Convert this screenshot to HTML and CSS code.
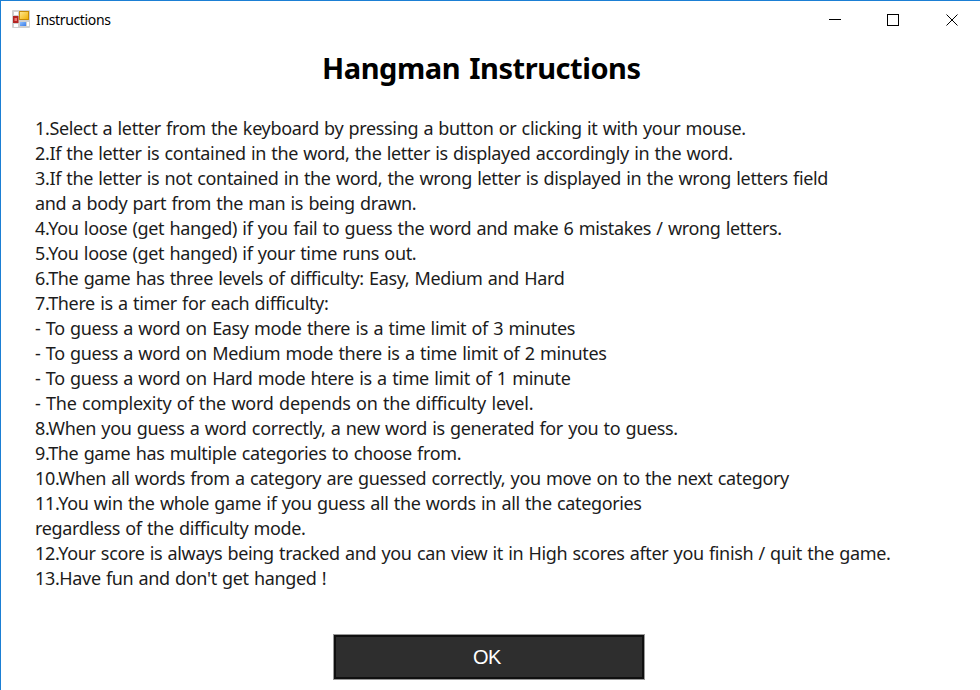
FILE: index.html
```
<!DOCTYPE html>
<html lang="en">
<head>
<meta charset="utf-8">
<title>Instructions</title>
<link rel="stylesheet" href="styles.css">
</head>
<body>
<div class="window">
  <header class="titlebar">
    <svg class="app-icon" width="18" height="18" viewBox="0 0 18 18">
      <defs>
        <linearGradient id="gold" x2="1" y2="1"><stop stop-color="#ffe995"/><stop offset="1" stop-color="#f0b000"/></linearGradient>
        <linearGradient id="blue" x2="1" y2="1"><stop stop-color="#8fc0ff"/><stop offset="1" stop-color="#397ce8"/></linearGradient>
      </defs>
      <rect width="18" height="18" rx="1" fill="#d0d0d0"/>
      <path d="M2 2h4v3H2zM2 14h4v3H2zM15 12h2v4h-2z" fill="#fff"/>
      <rect x="1" y="6" width="5.5" height="7" fill="#b32422"/>
      <rect x="2.5" y="8" width="2.5" height="3" fill="#ec7770"/>
      <rect x="7.5" y="1.5" width="9" height="8" fill="url(#gold)" stroke="#c68b08"/>
      <rect x="8" y="12" width="6" height="4" fill="url(#blue)"/>
    </svg>
    <span class="title">Instructions</span>
    <svg class="controls" width="128" height="14" viewBox="0 0 128 14" fill="none" stroke="#000">
      <path d="M0 6.500h12M58.500 1.500h11v11h-11z" shape-rendering="crispEdges"/>
      <path d="M117.500 1.500l11 11M128.500 1.500l-11 11"/>
    </svg>
  </header>
  <h1>Hangman Instructions</h1>
  <div class="instructions">
    <p>1.Select a letter from the keyboard by pressing a button or clicking it with your mouse.</p>
    <p>2.If the letter is contained in the word, the letter is displayed accordingly in the word.</p>
    <p>3.If the letter is not contained in the word, the wrong letter is displayed in the wrong letters field</p>
    <p>and a body part from the man is being drawn.</p>
    <p>4.You loose (get hanged) if you fail to guess the word and make 6 mistakes / wrong letters.</p>
    <p>5.You loose (get hanged) if your time runs out.</p>
    <p>6.The game has three levels of difficulty: Easy, Medium and Hard</p>
    <p>7.There is a timer for each difficulty:</p>
    <p class="sub">- To guess a word on Easy mode there is a time limit of 3 minutes</p>
    <p class="sub">- To guess a word on Medium mode there is a time limit of 2 minutes</p>
    <p class="sub">- To guess a word on Hard mode htere is a time limit of 1 minute</p>
    <p class="sub wide">- The complexity of the word depends on the difficulty level.</p>
    <p>8.When you guess a word correctly, a new word is generated for you to guess.</p>
    <p>9.The game has multiple categories to choose from.</p>
    <p>10.When all words from a category are guessed correctly, you move on to the next category</p>
    <p>11.You win the whole game if you guess all the words in all the categories</p>
    <p>regardless of the difficulty mode.</p>
    <p>12.Your score is always being tracked and you can view it in High scores after you finish / quit the game.</p>
    <p>13.Have fun and don't get hanged !</p>
  </div>
  <button class="ok">OK</button>
</div>
</body>
</html>
```
FILE: styles.css
```
* { box-sizing: border-box; }
body { margin: 0; overflow: hidden; background: #fff; font-family: "Noto Sans", "Open Sans", sans-serif; color: #000; }
.window { height: 690px; border-top: 1px solid #1b7fd4; border-left: 1px solid #1b7fd4; display: flex; flex-direction: column; }
.titlebar { height: 38px; flex: none; display: flex; align-items: center; padding: 0 23px 0 11px; }
.app-icon { flex: none; margin-top: -2px; }
.title { margin: -2px 0 0 6px; font-size: 14px; letter-spacing: -0.35px; }
.controls { margin-left: auto; overflow: visible; }
h1 { margin: 9px 0 0 321px; font-size: 29px; line-height: 40px; letter-spacing: -0.35px; word-spacing: 2px; white-space: nowrap; }
h1 { letter-spacing: -0.45px; }
.instructions { margin: 28px 0 1px 34px; }
.instructions p { margin: 0; font-size: 18px; line-height: 25px; letter-spacing: -0.35px; word-spacing: 0.92px; white-space: nowrap; width: max-content; color: #1c1c1c; }
.instructions .sub { word-spacing: 1.02px; }
.instructions .wide { letter-spacing: -0.24px; }
.ok { flex: none; width: 312px; height: 46px; margin: 42px 0 0 332px; padding: 0 4px 0 0; border: 3px solid #101010; outline: 1px solid #999; outline-offset: -1px; background: #2e2e2e; color: #fff; font: 20px "Liberation Sans", sans-serif; letter-spacing: -0.5px; }
```
